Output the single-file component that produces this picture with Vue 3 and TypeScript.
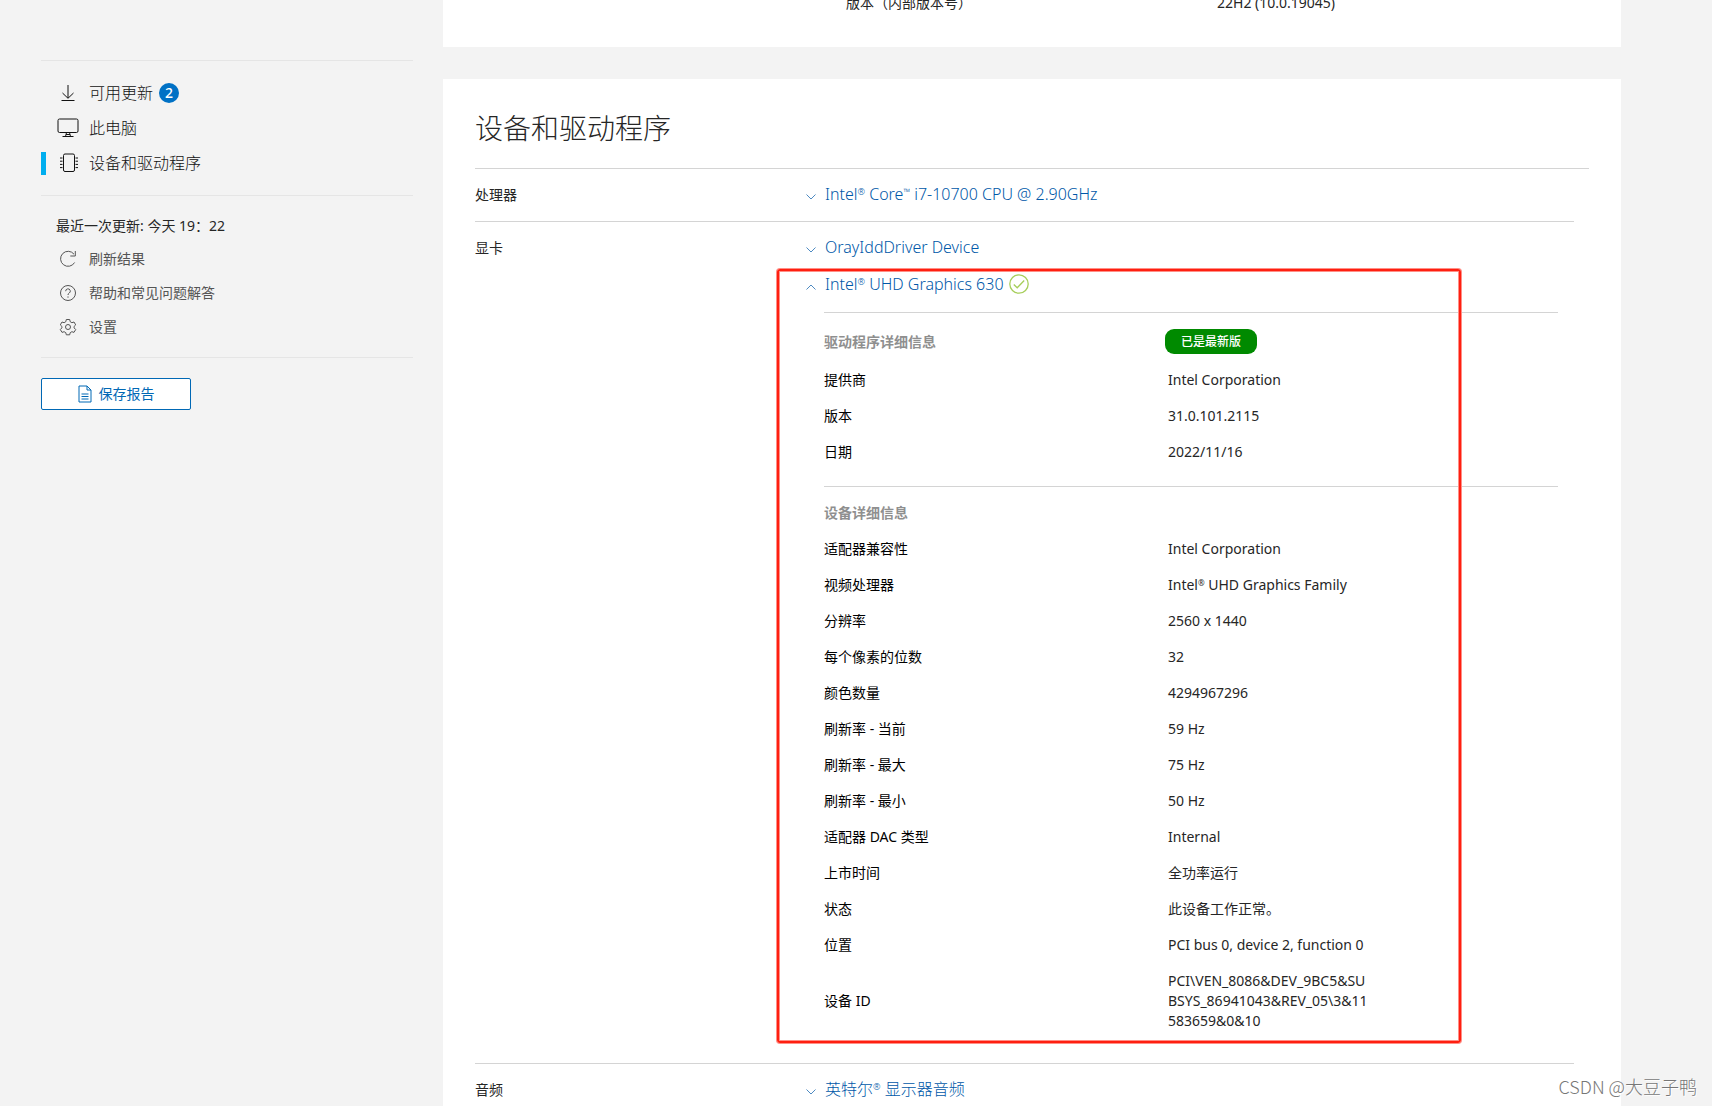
<script setup lang="ts">
interface Detail {
  label: string
  value: string
}

const driverDetails: Detail[] = [
  { label: '提供商', value: 'Intel Corporation' },
  { label: '版本', value: '31.0.101.2115' },
  { label: '日期', value: '2022/11/16' },
]

const deviceDetails: Detail[] = [
  { label: '适配器兼容性', value: 'Intel Corporation' },
  { label: '视频处理器', value: 'Intel® UHD Graphics Family' },
  { label: '分辨率', value: '2560 x 1440' },
  { label: '每个像素的位数', value: '32' },
  { label: '颜色数量', value: '4294967296' },
  { label: '刷新率 - 当前', value: '59 Hz' },
  { label: '刷新率 - 最大', value: '75 Hz' },
  { label: '刷新率 - 最小', value: '50 Hz' },
  { label: '适配器 DAC 类型', value: 'Internal' },
  { label: '上市时间', value: '全功率运行' },
  { label: '状态', value: '此设备工作正常。' },
  { label: '位置', value: 'PCI bus 0, device 2, function 0' },
  { label: '设备 ID', value: 'PCI\\VEN_8086&DEV_9BC5&SUBSYS_86941043&REV_05\\3&11583659&0&10' },
]

// Splits a name so that trademark signs can be set as small raised marks.
function parts(text: string): string[] {
  return text.split(/([®™])/).filter((p) => p.length > 0)
}
function isMark(part: string): boolean {
  return part === '®' || part === '™'
}
</script>

<template>
  <div class="page">
    <aside class="sidebar">
      <nav class="nav">
        <a href="#updates" class="nav-item">
          <svg class="icon" viewBox="0 0 22 22"><path d="M11 3v13M5.500 11l5.500 5.300L16.500 11M4.500 18.500h13" /></svg>
          <span>可用更新</span><span class="count">2</span>
        </a>
        <a href="#pc" class="nav-item">
          <svg class="icon" viewBox="0 0 22 22"><rect x="1" y="2" width="20" height="13.500" rx="1.500" /><path d="M9.500 15.500l-1 4M12.500 15.500l1 4M5.500 19.500h11M9 17.500h4" /></svg>
          <span>此电脑</span>
        </a>
        <a href="#devices" class="nav-item active">
          <svg class="icon" viewBox="0 0 22 22"><rect x="6.500" y="2" width="11" height="17.500" rx="1.500" /><path d="M3 6h2.500M3 9.200h2.500M3 12.400h2.500M3 15.600h2.500M18.500 6H21M18.500 9.200H21M18.500 12.400H21M18.500 15.600H21" /></svg>
          <span>设备和驱动程序</span>
        </a>
      </nav>
      <div class="tools">
        <p class="last">最近一次更新: 今天 19：22</p>
        <a href="#refresh" class="tool">
          <svg class="icon" viewBox="0 0 22 22"><path d="M17 6.200A7.500 7.500 0 1 0 17.600 14.500M18.300 3v5h-5" /></svg>刷新结果
        </a>
        <a href="#help" class="tool">
          <svg class="icon" viewBox="0 0 22 22"><circle cx="11" cy="11" r="7.500" /><path d="M8.700 9.200a2.300 2.300 0 1 1 3.500 1.900c-.8.500-1.200.9-1.200 1.900M11 14.400v1.300" /></svg>帮助和常见问题解答
        </a>
        <a href="#settings" class="tool">
          <svg class="icon" viewBox="0 0 22 22"><circle cx="11" cy="11" r="2.500" /><path d="M9.300 3.500h3.400l.5 2.200 1.700 1 2.100-.7 1.700 2.900-1.600 1.500v1.500l1.600 1.600-1.700 2.900-2.100-.7-1.700 1-.5 2.100H9.300l-.5-2.100-1.700-1-2.100.7-1.700-2.900 1.600-1.600v-1.500L3.300 8.900 5 6l2.100.7 1.700-1z" /></svg>设置
        </a>
      </div>
      <button type="button" class="save">
        <svg class="doc" viewBox="0 0 14 18"><path d="M1 1h8l4 4v12H1zM9 1v4h4M3.500 9h7M3.500 11.500h7M3.500 14h7" /></svg>
        <span>保存报告</span>
      </button>
    </aside>

    <main class="main">
      <section class="card os">
        <div class="os-row">
          <span>版本（内部版本号）</span>
          <span>22H2 (10.0.19045)</span>
        </div>
      </section>

      <section class="card devices">
        <h1>设备和驱动程序</h1>
        <div class="rows">
          <div class="row">
            <h2>处理器</h2>
            <div class="list">
              <button type="button" class="device">
                <svg class="chev" viewBox="0 0 10 6"><path d="M.5.500l4.500 4.500L9.500.500" /></svg>
                <span><span v-for="(p, i) in parts('Intel® Core™ i7-10700 CPU @ 2.90GHz')" :key="i" :class="{ mark: isMark(p) }">{{ p }}</span></span>
              </button>
            </div>
          </div>

          <div class="row">
            <h2>显卡</h2>
            <div class="list">
              <button type="button" class="device">
                <svg class="chev" viewBox="0 0 10 6"><path d="M.5.500l4.500 4.500L9.500.500" /></svg>
                <span>OrayIddDriver Device</span>
              </button>
              <div class="expanded">
                <button type="button" class="device" aria-expanded="true">
                  <svg class="chev" viewBox="0 0 10 6"><path d="M.5 5.500L5 1l4.500 4.500" /></svg>
                  <span><span v-for="(p, i) in parts('Intel® UHD Graphics 630')" :key="i" :class="{ mark: isMark(p) }">{{ p }}</span></span>
                  <svg class="ok" viewBox="0 0 20 20"><circle cx="10" cy="10" r="9.200" /><path d="M4.800 10.500l3.400 3.300 7-7.300" /></svg>
                </button>
                <div class="details">
                  <div class="group first">
                    <div class="group-head">
                      <h3>驱动程序详细信息</h3>
                      <span class="badge">已是最新版</span>
                    </div>
                    <table>
                      <tbody>
                        <tr v-for="d in driverDetails" :key="d.label">
                          <th scope="row">{{ d.label }}</th>
                          <td>{{ d.value }}</td>
                        </tr>
                      </tbody>
                    </table>
                  </div>
                  <div class="group">
                    <div class="group-head">
                      <h3>设备详细信息</h3>
                    </div>
                    <table>
                      <tbody>
                        <tr v-for="d in deviceDetails" :key="d.label">
                          <th scope="row">{{ d.label }}</th>
                          <td>
                            <div class="value"><span v-for="(p, i) in parts(d.value)" :key="i" :class="{ mark: isMark(p) }">{{ p }}</span></div>
                          </td>
                        </tr>
                      </tbody>
                    </table>
                  </div>
                </div>
                <div class="highlight"></div>
              </div>
            </div>
          </div>

          <div class="row">
            <h2>音频</h2>
            <div class="list">
              <button type="button" class="device">
                <svg class="chev" viewBox="0 0 10 6"><path d="M.5.500l4.500 4.500L9.500.500" /></svg>
                <span><span v-for="(p, i) in parts('英特尔® 显示器音频')" :key="i" :class="{ mark: isMark(p) }">{{ p }}</span></span>
              </button>
            </div>
          </div>
        </div>
      </section>
    </main>
    <div class="watermark">CSDN @大豆子鸭</div>
  </div>
</template>

<style>
body {
  margin: 0;
  background: #f3f3f3;
}
</style>

<style scoped>
.page {
  position: relative;
  display: grid;
  grid-template-columns: 443px 1fr;
  height: 100vh;
  overflow: hidden;
  background: #f3f3f3;
  color: #262626;
  font-family: "Noto Sans", "Noto Sans CJK SC", sans-serif;
  font-size: 14px;
  line-height: 20px;
}
h1,
h2,
h3,
p {
  margin: 0;
  font-weight: 400;
}
a {
  color: inherit;
  text-decoration: none;
}
button {
  font-family: inherit;
  cursor: pointer;
}
svg {
  flex: none;
  fill: none;
  stroke: currentColor;
}

.sidebar {
  padding: 60px 30px 0 41px;
}
.nav {
  border-top: 1px solid #e5e5e5;
  border-bottom: 1px solid #e5e5e5;
  padding: 14px 0 15px;
}
.nav-item {
  display: flex;
  align-items: center;
  height: 35px;
  padding-left: 16px;
  font-size: 16px;
  font-weight: 300;
  color: #111;
  position: relative;
}
.icon {
  width: 22px;
  height: 22px;
  margin-right: 10px;
}
.active::before {
  content: "";
  position: absolute;
  left: 0;
  top: 7px;
  width: 5px;
  height: 23px;
  background: #00aeef;
}
.count {
  width: 20px;
  margin-left: 6px;
  border-radius: 10px;
  background: #0071c5;
  color: #fff;
  font-size: 14px;
  font-weight: 500;
  text-align: center;
}
.tools {
  padding: 20px 0 13px;
  border-bottom: 1px solid #e5e5e5;
}
.last {
  padding: 0 15px 6px;
}
.tool {
  display: flex;
  align-items: center;
  height: 34px;
  padding-left: 16px;
  color: #555;
}
.save {
  display: flex;
  align-items: center;
  justify-content: center;
  gap: 7px;
  width: 150px;
  height: 32px;
  margin-top: 20px;
  border: 1px solid #0068b5;
  border-radius: 2px;
  background: #fff;
  color: #0068b5;
  font-size: 14px;
  line-height: 20px;
  padding: 0;
}
.doc {
  width: 14px;
  height: 18px;
}

.main {
  padding-right: 91px;
}
.card {
  background: #fff;
}
.os {
  display: flow-root;
  padding-bottom: 34px;
  margin-bottom: 32px;
}
.os-row {
  display: grid;
  grid-template-columns: 371px 1fr;
  margin: -7px 0 0 403px;
}
.devices {
  padding: 29px 32px 0;
}
h1 {
  padding-bottom: 20px;
  border-bottom: 1px solid #d4d4d4;
  font-size: 28px;
  font-weight: 300;
  line-height: 40px;
}
.rows {
  margin-right: 15px;
}
.row {
  display: grid;
  grid-template-columns: 331px 1fr;
  padding: 16px 0;
}
.row + .row {
  border-top: 1px solid #d4d4d4;
}
h2 {
  font-size: 14px;
}
.list {
  margin-top: -1px;
}
.device {
  display: flex;
  align-items: center;
  height: 20px;
  padding: 0;
  border: 0;
  background: none;
  color: #0058a8;
  font-size: 16px;
  font-weight: 300;
  line-height: 20px;
}
.chev {
  width: 10px;
  height: 6px;
  margin: 6px 9px 0 0;
  stroke-width: 0.7;
}
.mark {
  font-size: 9px;
  line-height: 1;
  vertical-align: 5px;
}
.value .mark {
  font-size: 8px;
  vertical-align: 4px;
}
.ok {
  width: 20px;
  height: 20px;
  margin-left: 5px;
  color: #a6ce5a;
  stroke-width: 1.3;
}
.expanded {
  position: relative;
  margin-top: 17px;
  padding-bottom: 8px;
}
.details {
  margin: 18px 16px 0 18px;
}
.group {
  border-top: 1px solid #d4d4d4;
}
.first {
  padding-bottom: 16px;
}
.group-head {
  display: grid;
  grid-template-columns: 341px 1fr;
  align-items: center;
  justify-items: start;
  padding: 16px 0 8px;
}
h3 {
  color: #8f8f8f;
  font-size: 14px;
  font-weight: 700;
}
.badge {
  width: 92px;
  border-radius: 9px;
  background: #008a00;
  color: #fff;
  font-size: 12px;
  font-weight: 500;
  line-height: 25px;
  text-align: center;
}
table {
  width: 100%;
  border-collapse: collapse;
  table-layout: fixed;
}
th,
td {
  padding: 8px 0;
  line-height: 20px;
  text-align: left;
  vertical-align: middle;
}
th {
  width: 344px;
  color: #000;
  font-weight: 400;
}
.value {
  max-width: 202px;
  word-break: break-all;
}
.highlight {
  position: absolute;
  top: -5px;
  right: 113px;
  bottom: 4px;
  left: -29px;
  border: 2px solid #ff1f10;
  border-radius: 3px;
  box-shadow: 0 0 0 1px #ff8f87, inset 0 0 0 1px #ff8f87;
  pointer-events: none;
}
.watermark {
  position: absolute;
  right: 15px;
  bottom: 8px;
  color: #777;
  font-family: "Noto Sans CJK SC", sans-serif;
  font-size: 18px;
  font-weight: 300;
  line-height: 24px;
  text-shadow: 1px 1px 0 #fff;
}
</style>
